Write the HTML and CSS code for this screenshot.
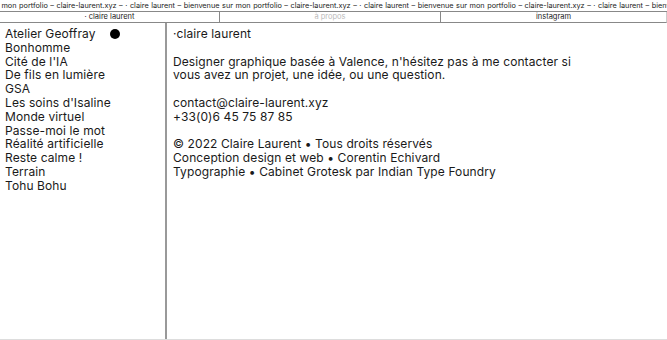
FILE: index.html
```html
<!DOCTYPE html>
<html lang="fr">
<head>
  <meta charset="UTF-8">
  <meta name="viewport" content="width=device-width, initial-scale=1.0">
  <title>Claire Laurent</title>
  <link rel="stylesheet" href="styles.css">
</head>
<body>
  <div class="ticker">
    <p>sur mon portfolio – claire-laurent.xyz – · claire laurent – bienvenue sur mon portfolio – claire-laurent.xyz – · claire laurent – bienvenue sur mon portfolio – claire-laurent.xyz – · claire laurent – bienvenue sur mon portfolio – claire-laurent.xyz</p>
  </div>

  <nav class="menu">
    <a href="#">· claire laurent</a>
    <a href="#" class="muted">à propos</a>
    <a href="#">instagram</a>
  </nav>

  <main class="layout">
    <ul class="projects">
      <li>Atelier Geoffray <span class="dot"></span></li>
      <li>Bonhomme</li>
      <li>Cité de l'IA</li>
      <li>De fils en lumière</li>
      <li>GSA</li>
      <li>Les soins d'Isaline</li>
      <li>Monde virtuel</li>
      <li>Passe-moi le mot</li>
      <li>Réalité artificielle</li>
      <li>Reste calme !</li>
      <li>Terrain</li>
      <li>Tohu Bohu</li>
    </ul>

    <section class="about">
      <p>·claire laurent</p>
      <p>Designer graphique basée à Valence, n'hésitez pas à me contacter si<br>vous avez un projet, une idée, ou une question.</p>
      <p>contact@claire-laurent.xyz<br>+33(0)6 45 75 87 85</p>
      <p>© 2022 Claire Laurent • Tous droits réservés<br>Conception design et web • Corentin Echivard<br>Typographie • Cabinet Grotesk par Indian Type Foundry</p>
    </section>
  </main>
</body>
</html>
```

FILE: styles.css
```css
* {
  box-sizing: border-box;
}
body {
  margin: 0;
  font-family: Inter, "Liberation Sans", sans-serif;
  color: #1a1a1a;
  background-color: white;
  height: 100vh;
  display: flex;
  flex-direction: column;
}
.ticker {
  height: 12px;
  border-bottom: 1px solid #888;
  overflow: hidden;
}
.ticker p {
  margin: 0 0 0 -12px;
  white-space: nowrap;
  font-size: 7.3px;
  line-height: 11px;
  word-spacing: 0.5px;
  color: #222;
}
.menu {
  display: grid;
  grid-template-columns: 220px 221px 1fr;
  height: 11px;
  border-bottom: 1px solid #888;
  border-right: 1px solid #ccc;
}
.menu a {
  text-align: center;
  font-size: 7.5px;
  line-height: 10px;
  color: #222;
  text-decoration: none;
  border-right: 1px solid #888;
}
.menu a:last-child {
  border-right: none;
}
.menu .muted {
  color: #bbb;
}
.layout {
  flex: 1;
  display: flex;
  border-bottom: 1px solid #ddd;
  font-size: 12px;
  line-height: 13.8px;
  letter-spacing: 0.1px;
}
.projects {
  list-style: none;
  margin: 0;
  padding: 4px 5px;
  width: 167px;
  border-right: 2px solid #999;
}
.dot {
  display: inline-block;
  width: 10px;
  height: 10px;
  margin-left: 11px;
  border-radius: 50%;
  background-color: #000;
  vertical-align: -1px;
}
.about {
  padding: 4px 6px;
}
.about p {
  margin: 0 0 13.8px;
}
```
